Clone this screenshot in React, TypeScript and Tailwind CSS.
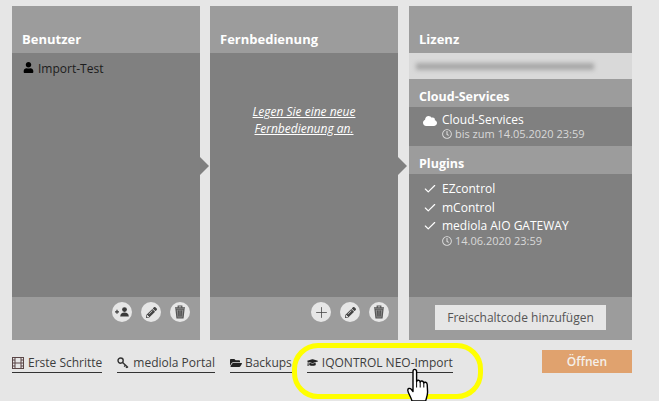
import React from "react";
import { FaUser, FaCloud, FaFolderOpen, FaGraduationCap, FaPencilAlt, FaRegClock } from "react-icons/fa";
import { Check, Plus } from "lucide-react";

const PanelHead = ({ title, tall }: { title: string; tall?: boolean }) => (
  <div className={`bg-[#9c9c9c] px-[10px] flex items-end text-white font-bold ${tall ? "h-[47px] pb-[4px] text-[13px]" : "h-[28px] text-[12.5px]"}`}>
    {title}
  </div>
);

const RoundButton = ({ children }: { children: React.ReactNode }) => (
  <button className="w-5 h-5 rounded-full bg-[#e6e6e6] flex items-center justify-center text-[#444]">{children}</button>
);

const Arrow = () => (
  <div className="absolute left-full top-[151px] w-0 h-0 border-y-[9px] border-y-transparent border-l-[9px] border-l-[#808080]" />
);

const FooterLink = ({ icon, label }: { icon: React.ReactNode; label: string }) => (
  <a className="flex items-center gap-[4px] h-[20px] border-b border-[#333] text-[#3d3d3d] text-[12px] leading-[19px]">
    {icon}
    {label}
  </a>
);

const TrashIcon = () => (
  <svg width="12" height="14" viewBox="0 0 12 14" fill="none" stroke="#555" strokeWidth="1.2">
    <path d="M1 2.8 H11 M4.2 2.5 V1 H7.8 V2.5" />
    <path d="M2 4.2 L3 13 H9 L10 4.2 Z" fill="#8a8a8a" />
    <path d="M4.5 5.5 L4.8 11.5 M6 5.5 V11.5 M7.5 5.5 L7.2 11.5" stroke="#444" strokeWidth="0.8" />
  </svg>
);

const UserPlusIcon = () => (
  <svg width="14" height="10" viewBox="0 0 14 10" fill="#3a3a3a">
    <path d="M0 4.2 H4 V5.4 H0 Z M1.4 2.8 H2.6 V6.8 H1.4 Z" />
    <circle cx="9.5" cy="2.6" r="2.4" />
    <path d="M5.2 9.5 C5.2 6.5 7 5.4 9.5 5.4 C12 5.4 13.8 6.5 13.8 9.5 Z" />
  </svg>
);

const FilmIcon = () => (
  <svg width="12" height="12" viewBox="0 0 12 12" fill="none" stroke="#5a4546" strokeWidth="1">
    <rect x="0.5" y="0.5" width="11" height="11" />
    <path d="M3 0.5 V11.5 M9 0.5 V11.5 M3 6 H9 M0.5 3 H3 M0.5 6 H3 M0.5 9 H3 M9 3 H11.5 M9 6 H11.5 M9 9 H11.5" />
  </svg>
);

const KeyIcon = () => (
  <svg width="12" height="12" viewBox="0 0 12 12" fill="none" stroke="#333" strokeWidth="1.4">
    <circle cx="3.6" cy="3.6" r="2.6" />
    <path d="M5.6 5.6 L11 10.6 M8.4 8.2 L7.2 9.6 M10 9.7 L9 10.8" />
  </svg>
);

const HandCursor = () => (
  <svg className="absolute left-[407px] top-[368px]" width="24" height="33" viewBox="0 0 24 33">
    <path
      d="M5 33 C4 29 1 25 0.8 22.5 C0.6 20.5 2.5 19.5 4.5 21.5 L6 23.5 V3.5 C6 0.6 9.5 0.6 9.6 3.5 V13.5 C10 11.6 12.8 11.8 13.2 14 C13.6 12.4 16.4 12.6 16.8 15 C17.4 13.6 20 14 20.2 16.5 L20.6 24 C20.6 27 19.6 29.5 18.6 33 Z"
      fill="#fff"
      stroke="#000"
      strokeWidth="1.4"
      strokeLinejoin="round"
    />
    <path d="M9.6 13 V19.5 M13.2 14 V19.5 M16.8 15 V19.5" stroke="#000" strokeWidth="1" fill="none" />
  </svg>
);

const App = () => {
  return (
    <div className="relative w-[659px] h-[401px] overflow-hidden bg-[#e6e6e6] pt-[6px] pl-[12px] font-['Open_Sans',sans-serif]">
      <div className="flex h-[334px]">
        <div className="relative w-[188px] mr-[10px] flex flex-col">
          <PanelHead title="Benutzer" tall />
          <div className="flex-1 bg-[#808080] pl-[11px] pt-[7px] text-[12px] leading-[18px] text-[#1c1c1c] flex items-start gap-[4px]">
            <FaUser className="mt-[2px] text-[11px] text-black" />
            Import-Test
          </div>
          <div className="h-[43px] bg-[#9c9c9c] flex justify-end pr-[10px] pt-[5px]">
            <div className="flex gap-[9px]">
              <RoundButton><UserPlusIcon /></RoundButton>
              <RoundButton><FaPencilAlt className="text-[11px]" /></RoundButton>
              <RoundButton><TrashIcon /></RoundButton>
            </div>
          </div>
          <Arrow />
        </div>

        <div className="relative w-[188px] mr-[11px] flex flex-col">
          <PanelHead title="Fernbedienung" tall />
          <div className="flex-1 bg-[#808080] pt-[50px] text-center text-white italic text-[12px] leading-[17px]">
            <a className="underline">Legen Sie eine neue</a>
            <br />
            <a className="underline">Fernbedienung an.</a>
          </div>
          <div className="h-[43px] bg-[#9c9c9c] flex justify-end pr-[9px] pt-[5px]">
            <div className="flex gap-[9px]">
              <RoundButton><Plus size={17} strokeWidth={1.1} className="text-[#444]" /></RoundButton>
              <RoundButton><FaPencilAlt className="text-[11px]" /></RoundButton>
              <RoundButton><TrashIcon /></RoundButton>
            </div>
          </div>
          <Arrow />
        </div>

        <div className="w-[223px] flex flex-col">
          <PanelHead title="Lizenz" tall />
          <div className="h-[26px] bg-[#d9d9d9] flex items-center pl-[7px] overflow-hidden">
            <div className="w-[178px] h-[7px] bg-[#a8a8a8] blur-[2px]" />
          </div>
          <PanelHead title="Cloud-Services" />
          <div className="h-[39px] bg-[#808080] pl-[14px] pt-[6px] flex gap-[5px] text-white text-[12px] leading-[14px]">
            <FaCloud className="mt-[1px] text-[14px]" />
            <div>
              <div>Cloud-Services</div>
              <div className="flex items-center gap-[3px] text-[#d9d9d9] text-[11px] leading-[13px]">
                <FaRegClock className="text-[10px]" />
                bis zum 14.05.2020 23:59
              </div>
            </div>
          </div>
          <PanelHead title="Plugins" />
          <div className="flex-1 bg-[#808080] pl-[14px] pt-[5px] text-white text-[12px] leading-[19px]">
            <div className="flex items-center gap-[5px]"><Check size={14} strokeWidth={2} />EZcontrol</div>
            <div className="flex items-center gap-[5px]"><Check size={14} strokeWidth={2} />mControl</div>
            <div className="flex items-center gap-[5px] leading-[18px]"><Check size={14} strokeWidth={2} />mediola AIO GATEWAY</div>
            <div className="flex items-center gap-[3px] ml-[19px] text-[#d9d9d9] text-[11px] leading-[11px]">
              <FaRegClock className="text-[10px]" />
              14.06.2020 23:59
            </div>
          </div>
          <div className="h-[43px] bg-[#9c9c9c] flex justify-center pt-[8px]">
            <button className="w-[171px] h-[25px] bg-[#e6e6e6] text-[#555] text-[12px]">Freischaltcode hinzufügen</button>
          </div>
        </div>
      </div>

      <div className="flex items-start mt-[10px] w-[620px]">
        <div className="flex gap-[15px] mt-[3px]">
          <FooterLink icon={<FilmIcon />} label="Erste Schritte" />
          <FooterLink icon={<KeyIcon />} label="mediola Portal" />
          <FooterLink icon={<FaFolderOpen className="text-[12px] -mr-[1px] text-[#222]" />} label="Backups" />
          <FooterLink icon={<FaGraduationCap className="text-[11px] text-[#222]" />} label="IQONTROL NEO-Import" />
        </div>
        <button className="ml-auto w-[90px] h-[23px] bg-[#e0a26e] text-[#f5f0ea] text-[12px] font-semibold">Öffnen</button>
      </div>

      {/* yellow marker drawn over the page */}
      <div className="absolute left-[292px] top-[343px] w-[191px] h-[56px] rounded-[26px] border-[5px] border-[#ffff00]" />

      <HandCursor />
    </div>
  );
};

export default App;
